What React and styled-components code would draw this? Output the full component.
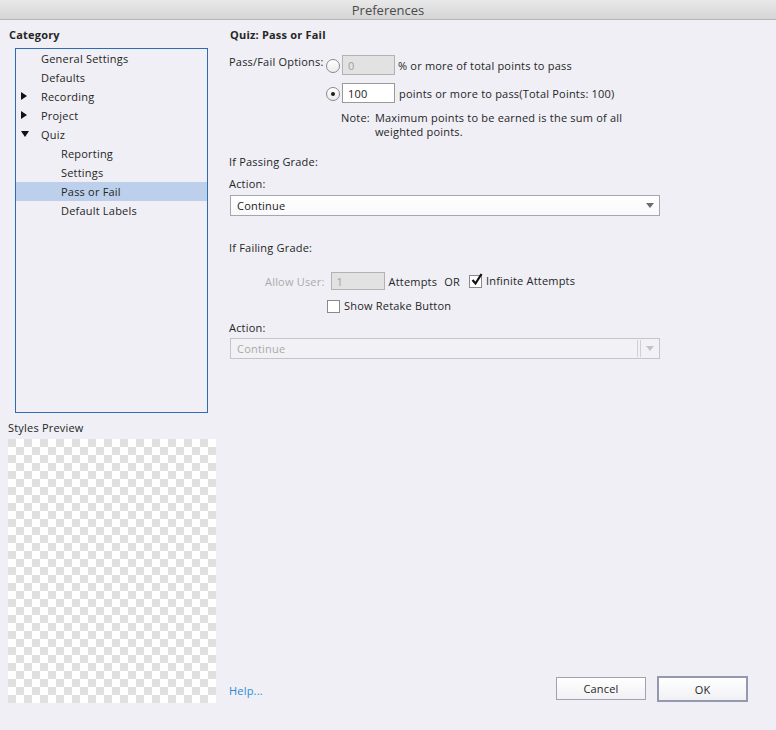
import React from "react";
import styled, { createGlobalStyle } from "styled-components";

const GlobalStyle = createGlobalStyle`
  html, body {
    margin: 0;
    padding: 0;
    background: #efeff5;
  }
  body {
    font-family: "Open Sans", "Noto Sans", sans-serif;
    font-size: 11px;
    letter-spacing: 0.2px;
    color: #262626;
  }
`;

const Window = styled.div`
  width: 776px;
  height: 730px;
  display: flex;
  flex-direction: column;
  overflow: hidden;
  background: #efeff5;
`;

const TitleBar = styled.div`
  height: 19px;
  flex-shrink: 0;
  border-bottom: 1px solid #b6b6b6;
  background: linear-gradient(#e9e9e9, #d5d5d5);
  display: flex;
  align-items: center;
  justify-content: center;
  font-size: 13px;
  letter-spacing: 0;
  color: #4a4a4a;
`;

const Body = styled.div`
  flex: 1;
  display: flex;
  padding: 8px 0 0 8px;
`;

const Sidebar = styled.div`
  width: 208px;
  display: flex;
  flex-direction: column;
`;

const Heading = styled.div`
  font-weight: 700;
  height: 20px;
  line-height: 14px;
  padding-left: 1px;
`;

const Tree = styled.div`
  margin-left: 7px;
  width: 193px;
  height: 365px;
  box-sizing: border-box;
  border: 1px solid #2d6cb0;
`;

const TreeRow = styled.div`
  height: 19px;
  box-sizing: border-box;
  padding-bottom: 1px;
  display: flex;
  align-items: center;
  padding-left: ${(p) => (p.$level === 2 ? 20 : 0)}px;
  background: ${(p) => (p.$selected ? "#bdd0eb" : "transparent")};
`;

const Expander = styled.span`
  width: 25px;
  flex-shrink: 0;
  display: flex;
  align-items: center;
  padding-left: 5px;
  box-sizing: border-box;
`;

const Triangle = styled.span`
  width: 0;
  height: 0;
  ${(p) =>
    p.$open
      ? `border-left: 4px solid transparent;
         border-right: 4px solid transparent;
         border-top: 6px solid #111;`
      : `border-top: 4px solid transparent;
         border-bottom: 4px solid transparent;
         border-left: 6px solid #111;`}
`;

const PreviewLabel = styled.div`
  margin-top: 8px;
  line-height: 14px;
`;

const Checker = styled.div`
  margin-top: 4px;
  width: 208px;
  height: 264px;
  background: conic-gradient(#fff 25%, #e0e0e0 0 50%, #fff 0 75%, #e0e0e0 0);
  background-size: 16px 16px;
`;

const Main = styled.div`
  flex: 1;
  margin-left: 13px;
  padding-right: 28px;
  padding-bottom: 28px;
  display: flex;
  flex-direction: column;
`;

const OptionsGrid = styled.div`
  margin-top: 7px;
  display: grid;
  grid-template-columns: 97px 16px 53px auto;
  row-gap: 8px;
  align-items: center;
`;

const GridLabel = styled.span`
  align-self: start;
  line-height: 14px;
`;

const Radio = styled.span`
  width: 12px;
  height: 12px;
  margin-top: 2px;
  border: 1px solid #8a8a8a;
  border-radius: 50%;
  background: linear-gradient(#fff, #ececec);
  display: flex;
  align-items: center;
  justify-content: center;
  &::after {
    content: "";
    width: 4px;
    height: 4px;
    border-radius: 50%;
    background: ${(p) => (p.$checked ? "#1e1e1e" : "transparent")};
  }
`;

const TextBox = styled.div`
  width: ${(p) => p.$width || 53}px;
  height: ${(p) => p.$height || 20}px;
  box-sizing: border-box;
  border: 1px solid ${(p) => (p.$disabled ? "#b2b2b2" : "#9a9a9a")};
  background: ${(p) => (p.$disabled ? "#e2e2e2" : "#fff")};
  color: ${(p) => (p.$disabled ? "#a0a0a0" : "#1a1a1a")};
  padding-left: 5px;
  display: flex;
  align-items: center;
`;

const AfterText = styled.span`
  padding-left: ${(p) => p.$pad || 3}px;
  white-space: nowrap;
`;

const Note = styled.div`
  margin-top: 8px;
  margin-left: 112px;
  display: flex;
  gap: 5px;
  line-height: 14px;
`;

const Label = styled.div`
  margin-top: ${(p) => p.$top || 0}px;
  line-height: 14px;
`;

const Select = styled.div`
  margin-top: ${(p) => p.$top || 4}px;
  margin-left: 1px;
  width: 430px;
  height: 21px;
  box-sizing: border-box;
  border: 1px solid ${(p) => (p.$disabled ? "#c4c4ca" : "#a6a6ae")};
  background: ${(p) =>
    p.$disabled ? "#f2f2f6" : "linear-gradient(#fff, #f9f9fb)"};
  color: ${(p) => (p.$disabled ? "#a9a9a9" : "#1a1a1a")};
  display: flex;
  align-items: center;
  padding-left: 6px;
`;

const SelectText = styled.span`
  flex: 1;
`;

const SelectDivider = styled.span`
  width: 2px;
  height: 17px;
  border-left: 1px solid #d0d0d6;
  border-right: 1px solid #d0d0d6;
  margin-right: 5px;
`;

const Arrow = styled.span`
  width: 0;
  height: 0;
  margin-right: 5px;
  border-left: 4px solid transparent;
  border-right: 4px solid transparent;
  border-top: 5px solid ${(p) => (p.$disabled ? "#c2c2c8" : "#6a6a72")};
`;

const AttemptsRow = styled.div`
  margin-top: 17px;
  padding-left: 36px;
  display: flex;
  align-items: center;
  height: 18px;
`;

const MutedText = styled.span`
  color: #ababab;
  margin-right: 6px;
`;

const CheckRow = styled.label`
  display: flex;
  align-items: center;
  gap: 4px;
  margin-left: ${(p) => p.$left || 0}px;
  margin-top: ${(p) => p.$top || 0}px;
  line-height: 14px;
`;

const Box = styled.span`
  position: relative;
  width: 11px;
  height: 11px;
  border: 1px solid #8a8a8a;
  background: #fff;
  flex-shrink: 0;
`;

const Tick = styled.svg`
  position: absolute;
  left: 1px;
  top: -3px;
  width: 12px;
  height: 13px;
`;

const Footer = styled.div`
  margin-top: auto;
  display: flex;
  align-items: center;
  height: 26px;
`;

const HelpLink = styled.a`
  color: #2c8bd6;
  text-decoration: none;
  flex: 1;
  padding-top: 3px;
`;

const Button = styled.button`
  font-family: inherit;
  font-size: 11px;
  letter-spacing: 0.2px;
  color: #262626;
  width: ${(p) => (p.$primary ? 91 : 90)}px;
  height: ${(p) => (p.$primary ? 26 : 23)}px;
  margin-left: ${(p) => (p.$primary ? 11 : 0)}px;
  margin-bottom: ${(p) => (p.$primary ? 0 : 1)}px;
  border: ${(p) => (p.$primary ? "2px solid #9499b0" : "1px solid #a2a2ac")};
  background: linear-gradient(#fff, #f1f1f5);
  padding: 0;
`;

const treeItems = [
  { label: "General Settings", level: 1 },
  { label: "Defaults", level: 1 },
  { label: "Recording", level: 1, expander: "closed" },
  { label: "Project", level: 1, expander: "closed" },
  { label: "Quiz", level: 1, expander: "open" },
  { label: "Reporting", level: 2 },
  { label: "Settings", level: 2 },
  { label: "Pass or Fail", level: 2, selected: true },
  { label: "Default Labels", level: 2 },
];

const Checkbox = ({ checked }) => (
  <Box>
    {checked ? (
      <Tick viewBox="0 0 12 13">
        <path d="M1.5 7 L4.5 10.5 L10.5 1" fill="none" stroke="#111" strokeWidth="2.2" />
      </Tick>
    ) : null}
  </Box>
);

const App = () => {
  return (
    <Window>
      <GlobalStyle />
      <TitleBar>Preferences</TitleBar>
      <Body>
        <Sidebar>
          <Heading>Category</Heading>
          <Tree>
            {treeItems.map((item) => (
              <TreeRow key={item.label} $level={item.level} $selected={item.selected}>
                <Expander>
                  {item.expander ? <Triangle $open={item.expander === "open"} /> : null}
                </Expander>
                {item.label}
              </TreeRow>
            ))}
          </Tree>
          <PreviewLabel>Styles Preview</PreviewLabel>
          <Checker />
        </Sidebar>

        <Main>
          <Heading>Quiz: Pass or Fail</Heading>
          <OptionsGrid>
            <GridLabel>Pass/Fail Options:</GridLabel>
            <Radio />
            <TextBox $disabled>0</TextBox>
            <AfterText>% or more of total points to pass</AfterText>

            <span />
            <Radio $checked />
            <TextBox>100</TextBox>
            <AfterText $pad={4}>points or more to pass(Total Points: 100)</AfterText>
          </OptionsGrid>
          <Note>
            <span>Note:</span>
            <span>
              Maximum points to be earned is the sum of all
              <br />
              weighted points.
            </span>
          </Note>

          <Label $top={16}>If Passing Grade:</Label>
          <Label $top={8}>Action:</Label>
          <Select>
            <SelectText>Continue</SelectText>
            <Arrow />
          </Select>

          <Label $top={25}>If Failing Grade:</Label>
          <AttemptsRow>
            <MutedText>Allow User:</MutedText>
            <TextBox $disabled $width={54} $height={18}>
              1
            </TextBox>
            <AfterText $pad={4}>Attempts</AfterText>
            <AfterText $pad={7}>OR</AfterText>
            <CheckRow $left={9}>
              <Checkbox checked />
              Infinite Attempts
            </CheckRow>
          </AttemptsRow>
          <CheckRow $left={98} $top={9}>
            <Checkbox />
            Show Retake Button
          </CheckRow>

          <Label $top={8}>Action:</Label>
          <Select $disabled $top={3}>
            <SelectText>Continue</SelectText>
            <SelectDivider />
            <Arrow $disabled />
          </Select>

          <Footer>
            <HelpLink href="#">Help...</HelpLink>
            <Button>Cancel</Button>
            <Button $primary>OK</Button>
          </Footer>
        </Main>
      </Body>
    </Window>
  );
};

export default App;
